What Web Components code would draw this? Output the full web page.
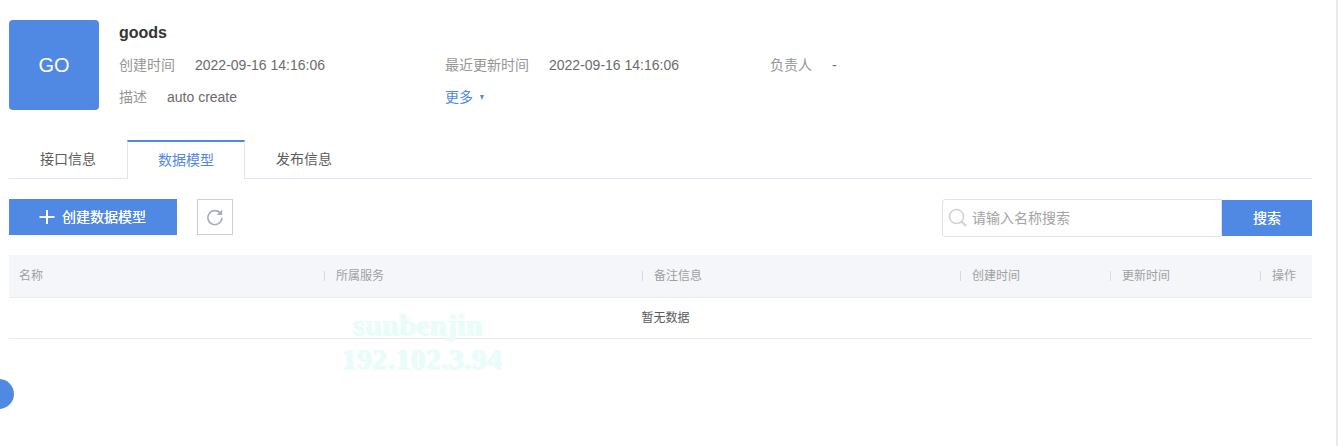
<!DOCTYPE html>
<html><head><meta charset="utf-8">
<style>
html,body{margin:0;padding:0;background:#fff;height:446px;overflow:hidden}
body{font-family:"Liberation Sans","Noto Sans CJK SC",sans-serif;font-size:14px;color:#333;position:relative}
</style></head><body>
<app-page></app-page>
<script>
const F='"Liberation Sans","Noto Sans CJK SC",sans-serif';
class InfoHeader extends HTMLElement{constructor(){super();this.attachShadow({mode:'open'}).innerHTML=`<style>
:host{display:flex;padding-top:20px;height:90px;font:14px ${F}}
.av{width:90px;height:90px;border-radius:4px;background:#4f89e4;color:#fff;font-size:20px;display:flex;align-items:center;justify-content:center;flex:none}
.body{margin-left:20px;flex:1;display:flex;flex-direction:column}
h1{margin:1px 0 0;font-size:16px;font-weight:bold;color:#333;line-height:24px}
.row{display:flex;height:32px;align-items:center;line-height:32px}
.row.first{margin-top:4px}
.c1{width:326px;display:flex}.c2{width:325px;display:flex}.c3{display:flex}
.l{color:#969696}
.v{color:#6b6b6b}
.more{color:#4f89e4;display:flex;align-items:center}
.more i{margin-left:7px;margin-top:1px;width:0;height:0;border-left:2.5px solid transparent;border-right:2.5px solid transparent;border-top:5px solid #4f89e4}
</style>
<div class="av">GO</div>
<div class="body"><h1>goods</h1>
<div class="row first"><div class="c1"><span class="l">创建时间</span><span class="v" style="margin-left:20px">2022-09-16 14:16:06</span></div>
<div class="c2"><span class="l">最近更新时间</span><span class="v" style="margin-left:20px">2022-09-16 14:16:06</span></div>
<div class="c3"><span class="l">负责人</span><span class="v" style="margin-left:20px">-</span></div></div>
<div class="row"><div class="c1"><span class="l">描述</span><span class="v" style="margin-left:20px">auto create</span></div>
<div class="c2"><span class="more">更多<i></i></span></div></div>
</div>`}}
customElements.define('info-header',InfoHeader);

class TabBar extends HTMLElement{constructor(){super();this.attachShadow({mode:'open'}).innerHTML=`<style>
:host{display:flex;height:38px;margin-top:30px;border-bottom:1px solid #dfe5f0;font:14px ${F};color:#5c5c5c}
.t{width:118px;text-align:center;line-height:39px;box-sizing:border-box;height:39px}
.t.a{color:#4f89e4;background:#fff;border:1px solid #dfe5f0;border-top:2px solid #4f89e4;border-bottom:0;line-height:37px}
</style><div class="t">接口信息</div><div class="t a">数据模型</div><div class="t">发布信息</div>`}}
customElements.define('tab-bar',TabBar);

class ToolBar extends HTMLElement{constructor(){super();this.attachShadow({mode:'open'}).innerHTML=`<style>
:host{display:flex;align-items:flex-start;margin-top:20px;height:38px;font:14px ${F}}
.add{width:168px;height:36px;box-sizing:border-box;padding-left:30px;background:#4f89e4;color:#fff;display:flex;align-items:center;font-size:14px;gap:7px}
.add svg{display:block}
.add span,.btn span{padding-bottom:2px;text-shadow:0 0 .4px #fff}
.ref{margin-left:20px;width:36px;height:36px;box-sizing:border-box;border:1px solid #ccd0d6;display:flex;align-items:center;justify-content:center}
.sp{flex:1}
.search{width:280px;height:38px;box-sizing:border-box;border:1px solid #dfe3ea;border-radius:3px 0 0 3px;display:flex;align-items:center;color:#a3a3a3;background:#fff}
.search svg{margin-left:5px;margin-right:4px;display:block}
.search span{padding-bottom:2px}
.btn{width:90px;height:36px;margin-top:1px;background:#4f89e4;color:#fff;display:flex;align-items:center;justify-content:center}
</style>
<div class="add"><svg width="16" height="16" viewBox="0 0 16 16"><path d="M8 1v14M.5 8h15" stroke="#fff" stroke-width="2" fill="none"/></svg><span>创建数据模型</span></div>
<div class="ref"><svg width="18" height="18" viewBox="0 0 18 18" fill="none"><path d="M14.6 5.6A7 7 0 1 0 15.9 9.8" stroke="#a8aeb8" stroke-width="1.6"/><path d="M16.2 1.6v5.4h-5.4z" fill="#a8aeb8"/></svg></div>
<div class="sp"></div>
<div class="search"><svg width="20" height="20" viewBox="0 0 20 20" fill="none"><circle cx="8.5" cy="8.5" r="7" stroke="#d2d2d2" stroke-width="1.6"/><path d="M13.5 13.5l4.5 4.5" stroke="#d2d2d2" stroke-width="2.2"/></svg><span>请输入名称搜索</span></div>
<div class="btn"><span>搜索</span></div>`}}
customElements.define('tool-bar',ToolBar);

class DataTable extends HTMLElement{constructor(){super();this.attachShadow({mode:'open'}).innerHTML=`<style>
:host{display:block;margin-top:18px;font:12px ${F}}
.h{display:grid;grid-template-columns:315px 318px 318px 150px 150px 1fr;height:42px;background:#f4f6fa;border-bottom:1px solid #e8ebf1;color:#a0a0a0;align-items:center}
.h div{padding-left:12px;position:relative;line-height:42px}
.h div:first-child{padding-left:10px}
.h div+div::before{content:"";position:absolute;left:0;top:16px;height:10px;width:1px;background:#d6d8dc}
.e{border-bottom:1px solid #e8ebf1;text-align:center;line-height:41px;color:#5a5a5a;padding-left:10px;box-sizing:border-box;height:41px}
</style>
<div class="h"><div>名称</div><div>所属服务</div><div>备注信息</div><div>创建时间</div><div>更新时间</div><div>操作</div></div>
<div class="e">暂无数据</div>`}}
customElements.define('data-table',DataTable);

class WaterMark extends HTMLElement{constructor(){super();this.attachShadow({mode:'open'}).innerHTML=`<style>
:host{position:absolute;left:322px;top:308px;width:200px;text-align:center;font:bold 30px/34px "Liberation Serif",serif;letter-spacing:.25px;color:#e8fcf9;pointer-events:none;text-shadow:1px 1px 0 #eefcf9,-1px 0 0 #f0fdfb}
div{white-space:nowrap}
.a{padding-right:8px;letter-spacing:.35px}
</style><div class="a">sunbenjin</div><div>192.102.3.94</div>`}}
customElements.define('water-mark',WaterMark);

class FloatDot extends HTMLElement{constructor(){super();this.attachShadow({mode:'open'}).innerHTML=`<style>
:host{position:absolute;left:-16px;top:379px;width:30px;height:30px;border-radius:50%;background:#4f89e4}
</style>`}}
customElements.define('float-dot',FloatDot);

class AppPage extends HTMLElement{constructor(){super();this.attachShadow({mode:'open'}).innerHTML=`<style>
:host{display:block;box-sizing:border-box;width:1338px;height:446px;padding:0 24px 0 9px;border-right:2px solid #eaeaea}
</style>
<info-header></info-header><tab-bar></tab-bar><tool-bar></tool-bar><data-table></data-table>
<water-mark></water-mark><float-dot></float-dot>`}}
customElements.define('app-page',AppPage);
</script>
</body></html>
